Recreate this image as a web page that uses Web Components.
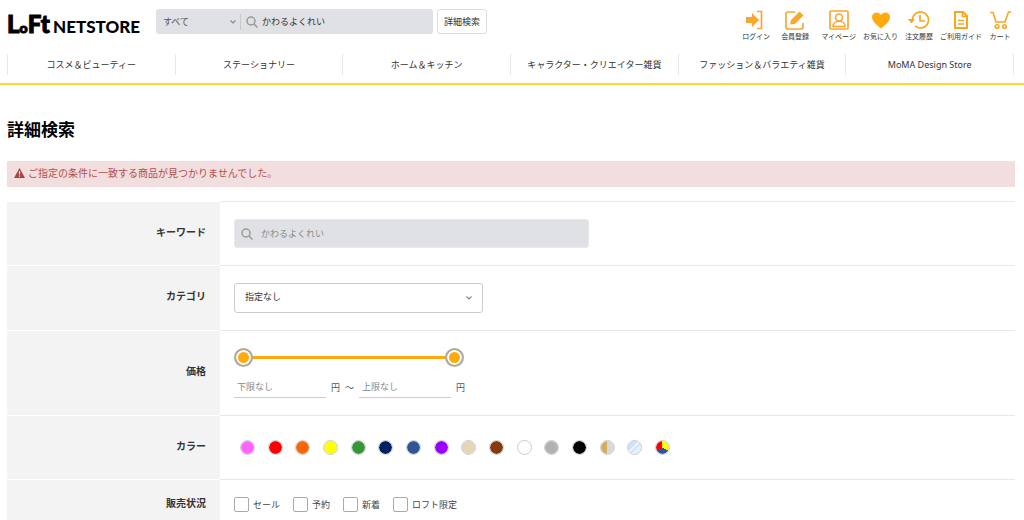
<!DOCTYPE html>
<html lang="ja">
<head>
<meta charset="utf-8">
<meta name="viewport" content="width=device-width, initial-scale=1">
<title>詳細検索 | LoFt NETSTORE</title>
<style>
  body { margin: 0; background: #fff; color: #333; font: 9px/14px "Noto Sans", "Noto Sans CJK JP", sans-serif; }
</style>
</head>
<body>
<store-header></store-header>
<category-nav>
  <a href="#cosme">コスメ＆ビューティー</a>
  <a href="#stationery">ステーショナリー</a>
  <a href="#home">ホーム＆キッチン</a>
  <a href="#character">キャラクター・クリエイター雑貨</a>
  <a href="#fashion">ファッション＆バラエティ雑貨</a>
  <a href="#moma">MoMA Design Store</a>
</category-nav>
<store-page heading="詳細検索">
  <alert-message>ご指定の条件に一致する商品が見つかりませんでした。</alert-message>
  <search-form></search-form>
</store-page>

<script>
function define(name, html, setup) {
  const template = document.createElement('template');
  template.innerHTML = '<style>*{box-sizing:border-box}input,select,button{font:inherit;color:inherit;margin:0;border-radius:0}a{color:inherit;text-decoration:none}svg{display:block}</style>' + html;
  customElements.define(name, class extends HTMLElement {
    constructor() {
      super();
      this.attachShadow({ mode: 'open' }).append(template.content.cloneNode(true));
    }
    connectedCallback() { if (setup) setup(this, this.shadowRoot); }
  });
}

const icons = {
  login: '<path d="M1 8h6V4l7 7-7 7v-4H1z" fill="#faa732"/><path d="M12 2.500h4.500v17H12" fill="none" stroke="#faa732" stroke-width="1.700"/>',
  register: '<path d="M11 3H4a2 2 0 0 0-2 2v13a2 2 0 0 0 2 2h13a2 2 0 0 0 2-2v-4" fill="none" stroke="#faa732" stroke-width="1.700"/><path d="M6 15.500l1-4.500 8.500-8.500 4 4L11 15z" fill="#faa732"/>',
  user: '<g fill="none" stroke="#faa732" stroke-width="1.700"><rect x="2" y="2" width="18" height="18" rx="1"/><circle cx="11" cy="8.500" r="3.500"/><path d="M5 17.500c0-7 12-7 12 0z"/></g>',
  heart: '<path d="M11 19.500C6 15.500 2 12 2 8c0-5.500 7-6 9-2 2-4 9-3.500 9 2 0 4-4 7.500-9 11.500z" fill="#ffab0f"/>',
  history: '<g fill="none" stroke="#faa61f" stroke-width="1.700"><path d="M4.500 11A8 8 0 1 1 7 16.800"/><path d="M12 6v6h5"/></g><path d="M0 10h7l-3.500 4.500z" fill="#faa61f"/>',
  guide: '<g fill="none" stroke="#faa61f" stroke-width="2"><path d="M5 3h8l4 4v12H5z"/><path d="M12.500 3v4.500H17M8 11.500h6M8 15h6" stroke-width="1.600"/></g>',
  cart: '<g fill="none" stroke="#faa61f" stroke-width="1.600"><path d="M1 3.500h3l3 9.500h9l3.500-10H22"/><circle cx="8" cy="17.500" r="1.800"/><circle cx="15.500" cy="17.500" r="1.800"/></g>'
};
const magnifier = '<svg class="glass" width="12" height="12" viewBox="0 0 12 12" fill="none" stroke="#999" stroke-width="1.500" aria-hidden="true"><circle cx="5" cy="5" r="4"/><path d="M8 8l3.500 3.500"/></svg>';
const chevron = '<svg class="chevron" width="6" height="4" viewBox="0 0 6 4" fill="none" stroke="#888" stroke-width="1.200" aria-hidden="true"><path d="M.5.500L3 3 5.500.500"/></svg>';

define('icon-link', `
<style>
  :host { display: block; }
  a { display: flex; flex-direction: column; align-items: center; font-size: 7px; line-height: 12px; white-space: nowrap; }
</style>
<a href="#"><svg width="22" height="22" viewBox="0 0 22 22" aria-hidden="true"></svg><slot></slot></a>`,
(host, root) => { root.querySelector('svg').innerHTML = icons[host.getAttribute('icon')]; });

define('store-logo', `
<style>
  :host { display: block; }
  a { display: flex; align-items: baseline; gap: 4px; color: #000; font-family: Lato, sans-serif; font-weight: 900; line-height: 30px; }
  .mark { width: 42px; white-space: nowrap; font-size: 24px; -webkit-text-stroke: 1px #000; }
  .mark small { font-size: 14px; }
  .name { font-size: 17px; }
</style>
<a href="#"><span class="mark">L<small>o</small><span>Ft</span></span><span class="name">NETSTORE</span></a>`);

define('store-search', `
<style>
  :host { display: block; }
  form { display: flex; gap: 4px; }
  .box { flex: 1; display: flex; align-items: center; height: 25px; background: #e0e1e5; border-radius: 3px; }
  .kind { display: grid; align-items: center; width: 85px; height: 16px; border-right: 1px solid #c8c8c8; }
  .kind > * { grid-area: 1 / 1; }
  .chevron { justify-self: end; margin-right: 4px; pointer-events: none; }
  select { appearance: none; width: 100%; border: 0; padding: 0 7px; background: none; color: #555; }
  .glass { margin: 0 4px 0 5px; }
  input { flex: 1; min-width: 0; border: 0; padding: 0; background: none; }
  button { width: 50px; padding: 0; background: #fff; border: 1px solid #ddd; border-radius: 3px; }
</style>
<form role="search">
  <div class="box">
    <div class="kind"><select aria-label="カテゴリ"><option>すべて</option></select>${chevron}</div>
    ${magnifier}<input type="text" aria-label="キーワード" value="かわるよくれい">
  </div>
  <button type="button">詳細検索</button>
</form>`);

define('store-header', `
<style>
  :host { display: flex; align-items: flex-start; height: 54px; padding: 9px 13px 0 7px; box-sizing: border-box; }
  store-logo { width: 149px; flex: none; }
  store-search { flex: 0 1 331px; }
  nav { display: flex; gap: 7px; margin-left: auto; }
  .account { display: flex; gap: 11px; margin-right: 5px; }
</style>
<store-logo></store-logo>
<store-search></store-search>
<nav aria-label="ご利用メニュー">
  <div class="account">
    <icon-link icon="login">ログイン</icon-link>
    <icon-link icon="register">会員登録</icon-link>
  </div>
  <icon-link icon="user">マイページ</icon-link>
  <icon-link icon="heart">お気に入り</icon-link>
  <icon-link icon="history">注文履歴</icon-link>
  <icon-link icon="guide">ご利用ガイド</icon-link>
  <icon-link icon="cart">カート</icon-link>
</nav>`);

define('category-nav', `
<style>
  :host { display: block; padding: 0 10px 8px 7px; border-bottom: 2px solid #fdd835; }
  nav { display: grid; grid-template-columns: repeat(6, 1fr); border-left: 1px solid #e8e8e8; }
  ::slotted(a) { color: #333; text-decoration: none; text-align: center; line-height: 21px; white-space: nowrap; border-right: 1px solid #e8e8e8; }
</style>
<nav aria-label="カテゴリ"><slot></slot></nav>`);

define('store-page', `
<style>
  :host { display: block; padding: 32px 9px 0 7px; }
  h1 { margin: 0 0 18px; color: #000; font-size: 17px; line-height: 26px; font-weight: 700; }
</style>
<main><h1></h1><slot></slot></main>`,
(host, root) => { root.querySelector('h1').textContent = host.getAttribute('heading'); });

define('alert-message', `
<style>
  :host { display: flex; align-items: center; gap: 3px; height: 26px; box-sizing: border-box; margin-bottom: 14px; padding: 0 7px 2px; background: #f2dede; color: #b0504e; font-size: 10px; }
</style>
<svg width="11" height="10" viewBox="0 0 11 10" aria-hidden="true"><path d="M5.500 0L11 10H0z" fill="#a94442"/><path d="M5.500 3v3.500M5.500 7.500v1.200" stroke="#f2dede" stroke-width="1.200"/></svg>
<span role="alert"><slot></slot></span>`);

define('form-row', `
<style>
  :host { display: grid; grid-template-columns: 213px 1fr; }
  .label { display: flex; align-items: center; justify-content: flex-end; padding: 0 14px 4px 0; background: #f3f3f3; border-top: 1px solid #fff; color: #333; font-size: 10px; font-weight: 700; }
  .field { padding: 17px 14px; border-top: 1px solid #e8e8e8; }
</style>
<div class="label"><slot name="label"></slot></div>
<div class="field"><slot></slot></div>`);

define('price-range', `
<style>
  :host { display: block; }
  .slider { display: grid; width: 230px; background: linear-gradient(#ffab0f, #ffab0f) center / 210px 3px no-repeat; }
  .slider input { grid-area: 1 / 1; appearance: none; width: 100%; height: 19px; background: none; pointer-events: none; }
  .slider input::-webkit-slider-thumb { appearance: none; width: 19px; height: 19px; border: 2px solid #aaa; border-radius: 50%; background: #ffab0f; box-shadow: inset 0 0 0 2px #fff; pointer-events: auto; }
  .limits { display: flex; align-items: center; gap: 5px; margin-top: 10px; color: #555; }
  .limits input { width: 92px; height: 21px; border: 0; border-bottom: 1px solid #ccc; padding: 0 3px 2px; background: none; }
  .limits input::placeholder { color: #888; opacity: 1; }
</style>
<div class="slider">
  <input type="range" min="0" max="100" value="0" aria-label="下限">
  <input type="range" min="0" max="100" value="100" aria-label="上限">
</div>
<div class="limits">
  <input type="text" placeholder="下限なし" aria-label="下限価格"><span>円</span><span>～</span>
  <input type="text" placeholder="上限なし" aria-label="上限価格"><span>円</span>
</div>`);

define('color-swatch', `
<style>
  :host { display: block; }
  input { appearance: none; display: block; width: 15px; height: 15px; border: 1px solid #ccc; border-radius: 50%; background: var(--swatch); background-clip: padding-box; }
</style>
<input type="checkbox">`,
(host, root) => { root.querySelector('input').setAttribute('aria-label', host.getAttribute('name')); });

define('check-option', `
<style>
  :host { display: block; }
  label { display: flex; align-items: center; gap: 4px; color: #444; }
  input { appearance: none; width: 15px; height: 15px; border: 1px solid #aaa; border-radius: 2px; background: #fff; }
</style>
<label><input type="checkbox"><span><slot></slot></span></label>`);

define('search-form', `
<style>
  :host { display: block; }
  .keyword { display: flex; align-items: center; max-width: 355px; height: 29px; padding-left: 6px; border: 1px solid #e8e9ec; border-radius: 3px; background: #e0e1e5; }
  .keyword input { flex: 1; min-width: 0; margin-left: 8px; border: 0; padding: 0; background: none; color: #888; }
  .select { display: grid; align-items: center; max-width: 249px; }
  .select > * { grid-area: 1 / 1; }
  select { appearance: none; height: 30px; padding: 0 10px 2px; border: 1px solid #ccc; border-radius: 3px; background: #fff; }
  .chevron { justify-self: end; margin-right: 11px; pointer-events: none; }
  .colors { display: flex; justify-content: space-between; max-width: 436px; padding: 7px 0 7px 6px; }
  .status { display: flex; gap: 13px; }
</style>
<form>
  <form-row><label slot="label" for="keyword">キーワード</label>
    <div class="keyword">${magnifier}<input id="keyword" type="text" value="かわるよくれい"></div></form-row>
  <form-row><label slot="label" for="category">カテゴリ</label>
    <div class="select"><select id="category"><option>指定なし</option></select>${chevron}</div></form-row>
  <form-row><span slot="label">価格</span><price-range></price-range></form-row>
  <form-row><span slot="label">カラー</span><div class="colors" role="group" aria-label="カラー"></div></form-row>
  <form-row><span slot="label">販売状況</span>
    <div class="status"><check-option>セール</check-option><check-option>予約</check-option><check-option>新着</check-option><check-option>ロフト限定</check-option></div></form-row>
</form>`,
(host, root) => {
  const colors = {
    'ピンク': '#ff66ff', 'レッド': '#ff0000', 'オレンジ': '#ff6600', 'イエロー': '#ffff00', 'グリーン': '#339933',
    'ネイビー': '#002060', 'ブルー': '#2f5597', 'パープル': '#9900ff', 'ベージュ': '#e6d5b8', 'ブラウン': '#843c0c',
    'ホワイト': '#ffffff', 'グレー': '#b2b2b2', 'ブラック': '#000000',
    'ゴールド・シルバー': 'linear-gradient(90deg, #d0ad66 50%, #d9d9d9 50%)',
    'クリア': 'linear-gradient(135deg, #cce0ff 40%, #eef5ff 40% 52%, #cce0ff 52% 60%, #e5f0ff 60%)',
    'マルチ': 'conic-gradient(#ffff00 120deg, #2f5597 120deg 240deg, #ff0000 240deg)'
  };
  const group = root.querySelector('.colors');
  group.replaceChildren(...Object.entries(colors).map(([name, fill]) => {
    const swatch = document.createElement('color-swatch');
    swatch.setAttribute('name', name);
    swatch.style.setProperty('--swatch', fill);
    return swatch;
  }));
});
</script>
</body>
</html>
